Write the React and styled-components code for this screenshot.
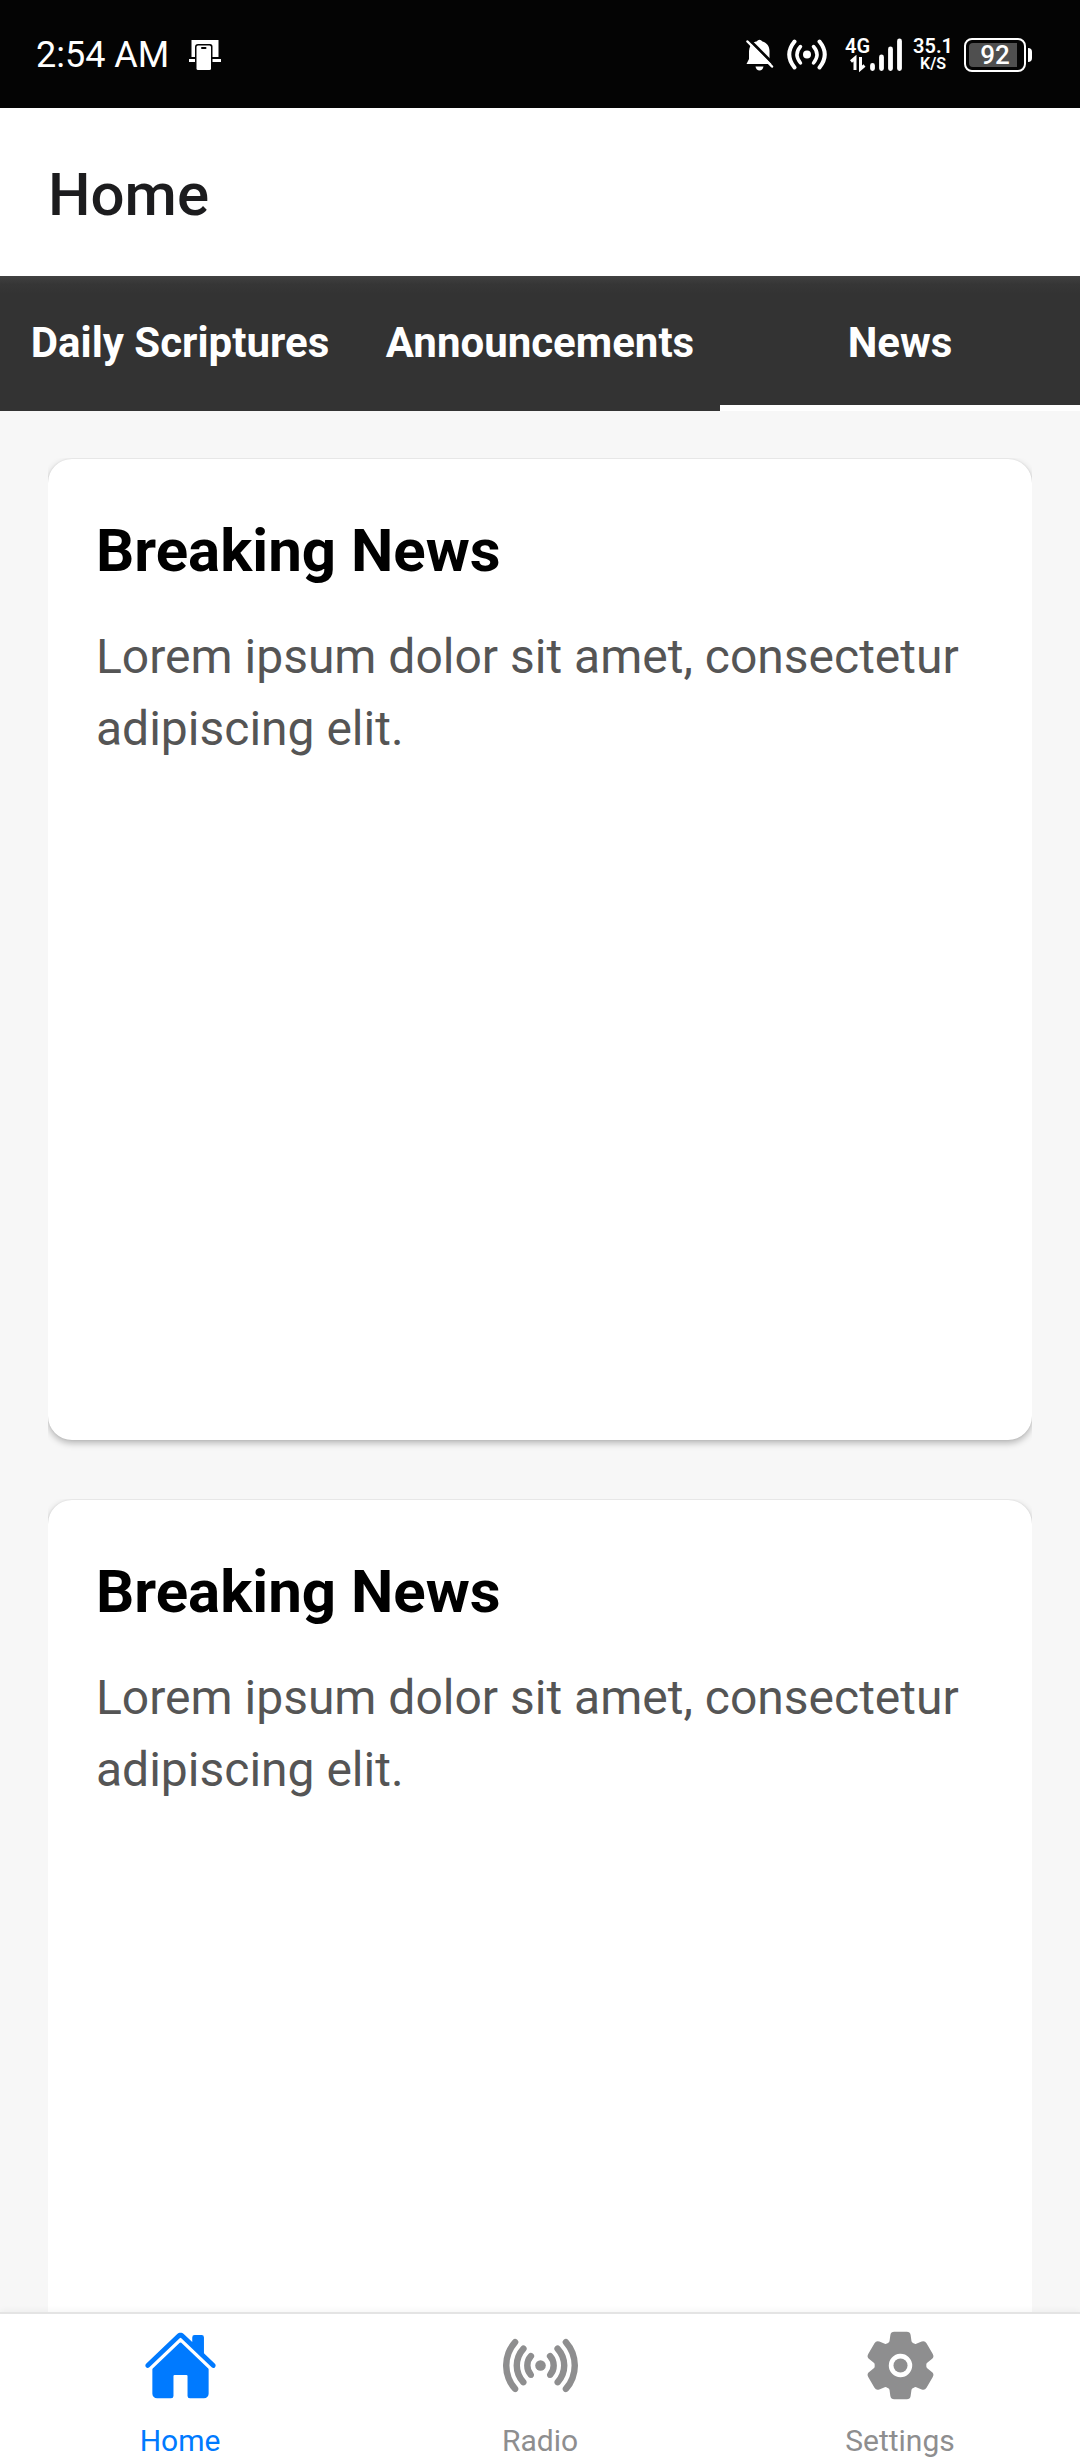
import React, { useState } from "react";
import styled, { createGlobalStyle } from "styled-components";
import { IoHome, IoRadio, IoSettings } from "react-icons/io5";

const GlobalStyle = createGlobalStyle`
  *, *::before, *::after { box-sizing: border-box; }
  body {
    margin: 0;
    background: #f7f7f7;
    font-family: Roboto, "Liberation Sans", sans-serif;
  }
  button { font: inherit; border: 0; padding: 0; background: none; cursor: pointer; }
  h1, h2, p { margin: 0; }
`;

const Screen = styled.div`
  display: flex;
  flex-direction: column;
  height: 100vh;
  overflow: hidden;
`;

const StatusBar = styled.div`
  display: flex;
  align-items: center;
  justify-content: space-between;
  flex: none;
  height: 108px;
  padding: 2px 48px 0 36px;
  background: #040404;
  color: #fff;
  svg { display: block; flex: none; }
`;

const StatusGroup = styled.div`
  display: flex;
  align-items: center;
  gap: ${(p) => p.$gap}px;
`;

const Clock = styled.span`
  font-size: 36px;
  line-height: 42px;
`;

const Stack = styled.div`
  display: flex;
  flex-direction: column;
  align-items: center;
`;

const Tiny = styled.span`
  font-size: ${(p) => (p.$small ? 16 : 20)}px;
  line-height: 18px;
  font-weight: 600;
`;

const Signal = styled.div`
  display: flex;
  align-items: center;
`;

const Battery = styled.div`
  display: flex;
  align-items: center;
  gap: 2px;
`;

const BatteryShell = styled.div`
  width: 62px;
  height: 34px;
  padding: 3px;
  border: 2px solid #fff;
  border-radius: 8px;
`;

const BatteryFill = styled.div`
  display: flex;
  align-items: center;
  justify-content: center;
  width: 100%;
  height: 100%;
  border-radius: 4px;
  background: linear-gradient(to right, #4f4f4f 92%, transparent 92%);
  font-size: 26px;
  line-height: 24px;
  font-weight: 500;
`;

const BatteryTip = styled.div`
  width: 4px;
  height: 14px;
  border-radius: 0 4px 4px 0;
  background: #fff;
`;

const Header = styled.header`
  display: flex;
  align-items: center;
  flex: none;
  height: 168px;
  padding: 6px 48px 0;
  background: #fff;
`;

const HeaderTitle = styled.h1`
  font-size: 60px;
  line-height: 72px;
  font-weight: 500;
  color: #1c1c1e;
`;

const Tabs = styled.div`
  display: grid;
  grid-template-columns: repeat(3, 1fr);
  flex: none;
  height: 135px;
  background: linear-gradient(#414141, #363636 8px, #333 18px);
`;

const Tab = styled.button`
  border-top: 4px solid transparent;
  border-bottom: 6px solid ${(p) => (p.$active ? "#fff" : "transparent")};
  color: #fff;
  font-size: 42px;
  line-height: 48px;
  font-weight: 700;
  white-space: nowrap;
`;

const Feed = styled.main`
  display: flex;
  flex-direction: column;
  gap: 60px;
  flex: 1;
  min-height: 0;
  padding: 48px;
  overflow-y: auto;
  scrollbar-width: none;
`;

const Card = styled.article`
  flex: none;
  min-height: 981px;
  padding: 48px;
  border-radius: 24px;
  background: #fff;
  box-shadow: 0 3px 7px rgba(0, 0, 0, 0.28), 0 0 2px rgba(0, 0, 0, 0.08);
  clip-path: inset(-1px 0 -16px 0);
`;

const CardTitle = styled.h2`
  margin-bottom: 26px;
  font-size: 60px;
  line-height: 88px;
  font-weight: 700;
  color: #000;
`;

const CardText = styled.p`
  font-size: 48px;
  line-height: 72px;
  color: #555;
`;

const BottomNav = styled.nav`
  display: grid;
  grid-template-columns: repeat(3, 1fr);
  flex: none;
  z-index: 1;
  padding: 14px 0 1px;
  border-top: 2px solid #e4e4e4;
  background: #fff;
  box-shadow: 0 -2px 6px rgba(0, 0, 0, 0.04);
`;

const NavLink = styled.a`
  display: flex;
  flex-direction: column;
  align-items: center;
  gap: 20px;
  color: ${(p) => (p.$active ? "#007aff" : "#8e8e8f")};
  font-size: 30px;
  line-height: 36px;
  text-decoration: none;
  svg { display: block; }
`;

const DeviceIcon = () => (
  <svg width="32" height="32" viewBox="0 0 32 32" fill="#fff" aria-hidden="true">
    <path d="M2.500 1h27v17h-6V7.500Q23.500 5 21 5H9Q6 5 6 8v10H2.500z" />
    <path d="M0 20h6v3H0zM23.500 20H32v3h-8.500z" />
    <rect x="7.500" y="6.500" width="14.500" height="24.500" rx="1.500" />
    <rect x="12" y="8" width="5.500" height="2" rx="1" fill="#040404" />
  </svg>
);

const MutedBellIcon = () => (
  <svg width="28" height="32" viewBox="0 0 28 32" aria-hidden="true">
    <path d="M3 12C4 5 7 3 10.500 2.500Q13.500 -1 16.500 2.500C20.500 3.500 23.500 7 23.500 12v8l3 5H0.500l2.500-5z" fill="#fff" />
    <path d="M9.500 27.500h8q-.8 4-4 4t-4-4z" fill="#fff" />
    <path d="M2.500 0L29 26.500" stroke="#040404" strokeWidth="3" />
    <path d="M1.500 2.500L26 27.500" stroke="#fff" strokeWidth="2.500" strokeLinecap="round" />
  </svg>
);

const HotspotIcon = () => (
  <svg width="40" height="32" viewBox="0 0 40 32" fill="none" stroke="#fff" strokeWidth="4" strokeLinecap="round" aria-hidden="true">
    <circle cx="20" cy="15.500" r="4" fill="#fff" stroke="none" />
    <path d="M7.500 2.500Q-3 15.500 7.500 28.500M32.500 2.500Q43 15.500 32.500 28.500" />
    <path d="M13.500 7.500Q6.500 15.500 13.500 24M26.500 7.500Q33.500 15.500 26.500 24" strokeWidth="3.500" />
  </svg>
);

const DataArrowsIcon = () => (
  <svg width="16" height="18" viewBox="0 0 16 18" fill="none" stroke="#fff" strokeWidth="3" aria-hidden="true">
    <path d="M5 15V3L1 6.500" />
    <path d="M10.500 2v12L14.500 10.500" />
  </svg>
);

const SignalBarsIcon = () => (
  <svg width="32" height="34" viewBox="0 0 32 34" stroke="#fff" strokeWidth="4.800" strokeLinecap="round" aria-hidden="true">
    <path d="M2.500 27.500v3M11.500 19v11.500M20.500 11v19.500M29.500 3v27.500" />
  </svg>
);

const TAB_LABELS = ["Daily Scriptures", "Announcements", "News"];

const NEWS = [1, 2].map((id) => ({
  id,
  title: "Breaking News",
  text: "Lorem ipsum dolor sit amet, consectetur adipiscing elit.",
}));

const NAV_ITEMS = [
  { label: "Home", Icon: IoHome },
  { label: "Radio", Icon: IoRadio },
  { label: "Settings", Icon: IoSettings },
];

export default function App() {
  const [tab, setTab] = useState("News");

  return (
    <Screen>
      <GlobalStyle />
      <StatusBar>
        <StatusGroup $gap={20}>
          <Clock>2:54 AM</Clock>
          <DeviceIcon />
        </StatusGroup>
        <StatusGroup $gap={18}>
          <StatusGroup $gap={13}>
            <MutedBellIcon />
            <HotspotIcon />
          </StatusGroup>
          <StatusGroup $gap={11}>
            <Signal>
              <Stack>
                <Tiny>4G</Tiny>
                <DataArrowsIcon />
              </Stack>
              <SignalBarsIcon />
            </Signal>
            <Stack>
              <Tiny>35.1</Tiny>
              <Tiny $small>K/S</Tiny>
            </Stack>
            <Battery>
              <BatteryShell>
                <BatteryFill>92</BatteryFill>
              </BatteryShell>
              <BatteryTip />
            </Battery>
          </StatusGroup>
        </StatusGroup>
      </StatusBar>

      <Header>
        <HeaderTitle>Home</HeaderTitle>
      </Header>

      <Tabs role="tablist">
        {TAB_LABELS.map((label) => (
          <Tab
            key={label}
            role="tab"
            aria-selected={tab === label}
            $active={tab === label}
            onClick={() => setTab(label)}
          >
            {label}
          </Tab>
        ))}
      </Tabs>

      <Feed>
        {NEWS.map((item) => (
          <Card key={item.id}>
            <CardTitle>{item.title}</CardTitle>
            <CardText>{item.text}</CardText>
          </Card>
        ))}
      </Feed>

      <BottomNav>
        {NAV_ITEMS.map(({ label, Icon }, i) => (
          <NavLink key={label} href={`#${label.toLowerCase()}`} $active={i === 0}>
            <Icon size={75} aria-hidden="true" />
            {label}
          </NavLink>
        ))}
      </BottomNav>
    </Screen>
  );
}
